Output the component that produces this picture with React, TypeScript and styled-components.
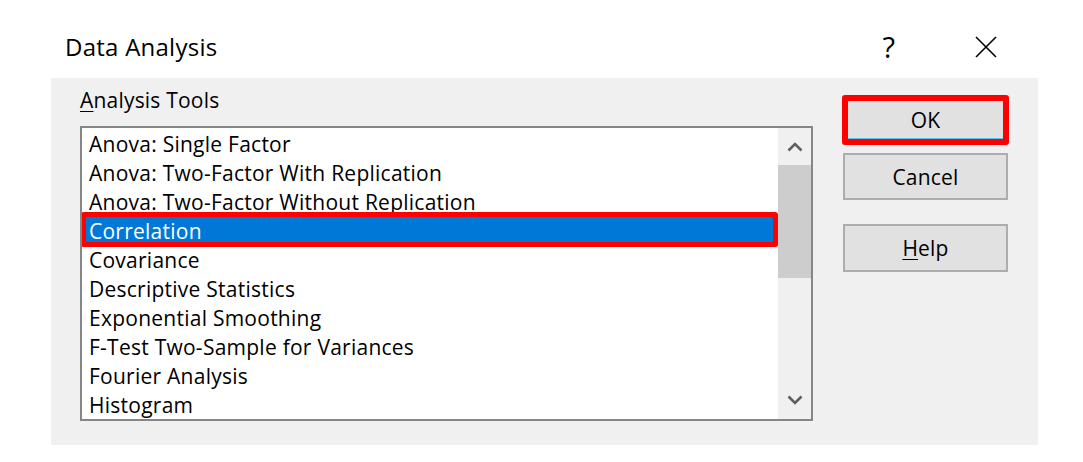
import styled, { createGlobalStyle } from "styled-components";

const GlobalStyle = createGlobalStyle`
  html, body {
    margin: 0;
    background: #ffffff;
  }
  body {
    font-family: "Open Sans", "Noto Sans", sans-serif;
    color: #000;
  }
`;

const Page = styled.div`
  padding: 15px 0 0 51px;
`;

const Dialog = styled.div`
  width: 987px;
  display: flex;
  flex-direction: column;
`;

const TitleBar = styled.div`
  height: 63px;
  display: flex;
  align-items: center;
  padding: 0 41px 0 14px;
  background: #fff;
`;

const Title = styled.div`
  font-size: 24px;
  letter-spacing: 0.25px;
`;

const TitleActions = styled.div`
  margin-left: auto;
  display: flex;
  align-items: center;
  gap: 80px;
`;

const HelpMark = styled.span`
  font-size: 29px;
  line-height: 1;
`;

const Body = styled.div`
  height: 367px;
  box-sizing: border-box;
  background: #f0f0f0;
  display: flex;
  align-items: flex-start;
  gap: 30px;
  padding: 0 30px 0 29px;
`;

const ToolsColumn = styled.div`
  width: 733px;
  display: flex;
  flex-direction: column;
`;

const Label = styled.div`
  font-size: 21px;
  line-height: 28px;
  letter-spacing: 0.2px;
  margin: 8px 0 12px;
`;

const Accel = styled.span`
  text-decoration: underline;
  text-underline-offset: 3px;
  text-decoration-thickness: 1px;
`;

const ListBox = styled.div`
  height: 295px;
  box-sizing: border-box;
  border: 2px solid #868686;
  background: #fff;
  display: flex;
`;

const Items = styled.div`
  flex: 1;
  padding-top: 2px;
  overflow: hidden;
`;

const Item = styled.div<{ $selected?: boolean }>`
  position: relative;
  height: 29px;
  line-height: 29px;
  padding-left: 7px;
  font-size: 21px;
  letter-spacing: 0.25px;
  white-space: nowrap;
  background: ${(p) => (p.$selected ? "#0078d7" : "transparent")};
  color: ${(p) => (p.$selected ? "#fff" : "#000")};

  ${(p) =>
    p.$selected &&
    `
    &::after {
      content: "";
      position: absolute;
      top: -5px;
      bottom: -1px;
      left: -1px;
      right: 0;
      border: 5px solid #ff0000;
      border-radius: 3px;
    }
  `}
`;

const ScrollBar = styled.div`
  width: 33px;
  background: #f0f0f0;
  display: flex;
  flex-direction: column;
`;

const ArrowCell = styled.div<{ $h: number }>`
  height: ${(p) => p.$h}px;
  display: flex;
  align-items: center;
  justify-content: center;
`;

const Thumb = styled.div`
  height: 113px;
  background: #cdcdcd;
`;

const Track = styled.div`
  flex: 1;
`;

const ButtonColumn = styled.div`
  width: 165px;
  padding-top: 17px;
  display: flex;
  flex-direction: column;
`;

const DialogButton = styled.button<{ $primary?: boolean; $h: number; $gap: number }>`
  height: ${(p) => p.$h}px;
  margin-top: ${(p) => p.$gap}px;
  box-sizing: border-box;
  background: #e1e1e1;
  border: ${(p) => (p.$primary ? "6px solid #ff0000" : "2px solid #adadad")};
  border-radius: ${(p) => (p.$primary ? "3px" : "0")};
  box-shadow: ${(p) => (p.$primary ? "inset 0 -1px 0 #5cc3f5" : "none")};
  font-family: inherit;
  font-size: 21px;
  letter-spacing: 0.2px;
  color: #000;
  padding: 0;
  width: ${(p) => (p.$primary ? "167px" : "165px")};
  margin-left: ${(p) => (p.$primary ? "-1px" : "0")};
`;

const tools = [
  "Anova: Single Factor",
  "Anova: Two-Factor With Replication",
  "Anova: Two-Factor Without Replication",
  "Correlation",
  "Covariance",
  "Descriptive Statistics",
  "Exponential Smoothing",
  "F-Test Two-Sample for Variances",
  "Fourier Analysis",
  "Histogram",
];

function Chevron({ up }: { up?: boolean }) {
  return (
    <svg width="16" height="10" viewBox="0 0 16 10">
      <polyline
        points={up ? "1.5,8.5 8,2 14.5,8.5" : "1.5,1.5 8,8 14.5,1.5"}
        fill="none"
        stroke="#5f5f5f"
        strokeWidth="2.6"
      />
    </svg>
  );
}

export default function App() {
  return (
    <Page>
      <GlobalStyle />
      <Dialog>
        <TitleBar>
          <Title>Data Analysis</Title>
          <TitleActions>
            <HelpMark>?</HelpMark>
            <svg width="22" height="22" viewBox="0 0 22 22">
              <path d="M1 1 L21 21 M21 1 L1 21" stroke="#000" strokeWidth="1.6" />
            </svg>
          </TitleActions>
        </TitleBar>
        <Body>
          <ToolsColumn>
            <Label>
              <Accel>A</Accel>nalysis Tools
            </Label>
            <ListBox>
              <Items>
                {tools.map((t) => (
                  <Item key={t} $selected={t === "Correlation"}>
                    {t}
                  </Item>
                ))}
              </Items>
              <ScrollBar>
                <ArrowCell $h={37}>
                  <Chevron up />
                </ArrowCell>
                <Thumb />
                <Track />
                <ArrowCell $h={39}>
                  <Chevron />
                </ArrowCell>
              </ScrollBar>
            </ListBox>
          </ToolsColumn>
          <ButtonColumn>
            <DialogButton $primary $h={50} $gap={0}>
              OK
            </DialogButton>
            <DialogButton $h={47} $gap={8}>
              Cancel
            </DialogButton>
            <DialogButton $h={48} $gap={24}>
              <Accel>H</Accel>elp
            </DialogButton>
          </ButtonColumn>
        </Body>
      </Dialog>
    </Page>
  );
}
